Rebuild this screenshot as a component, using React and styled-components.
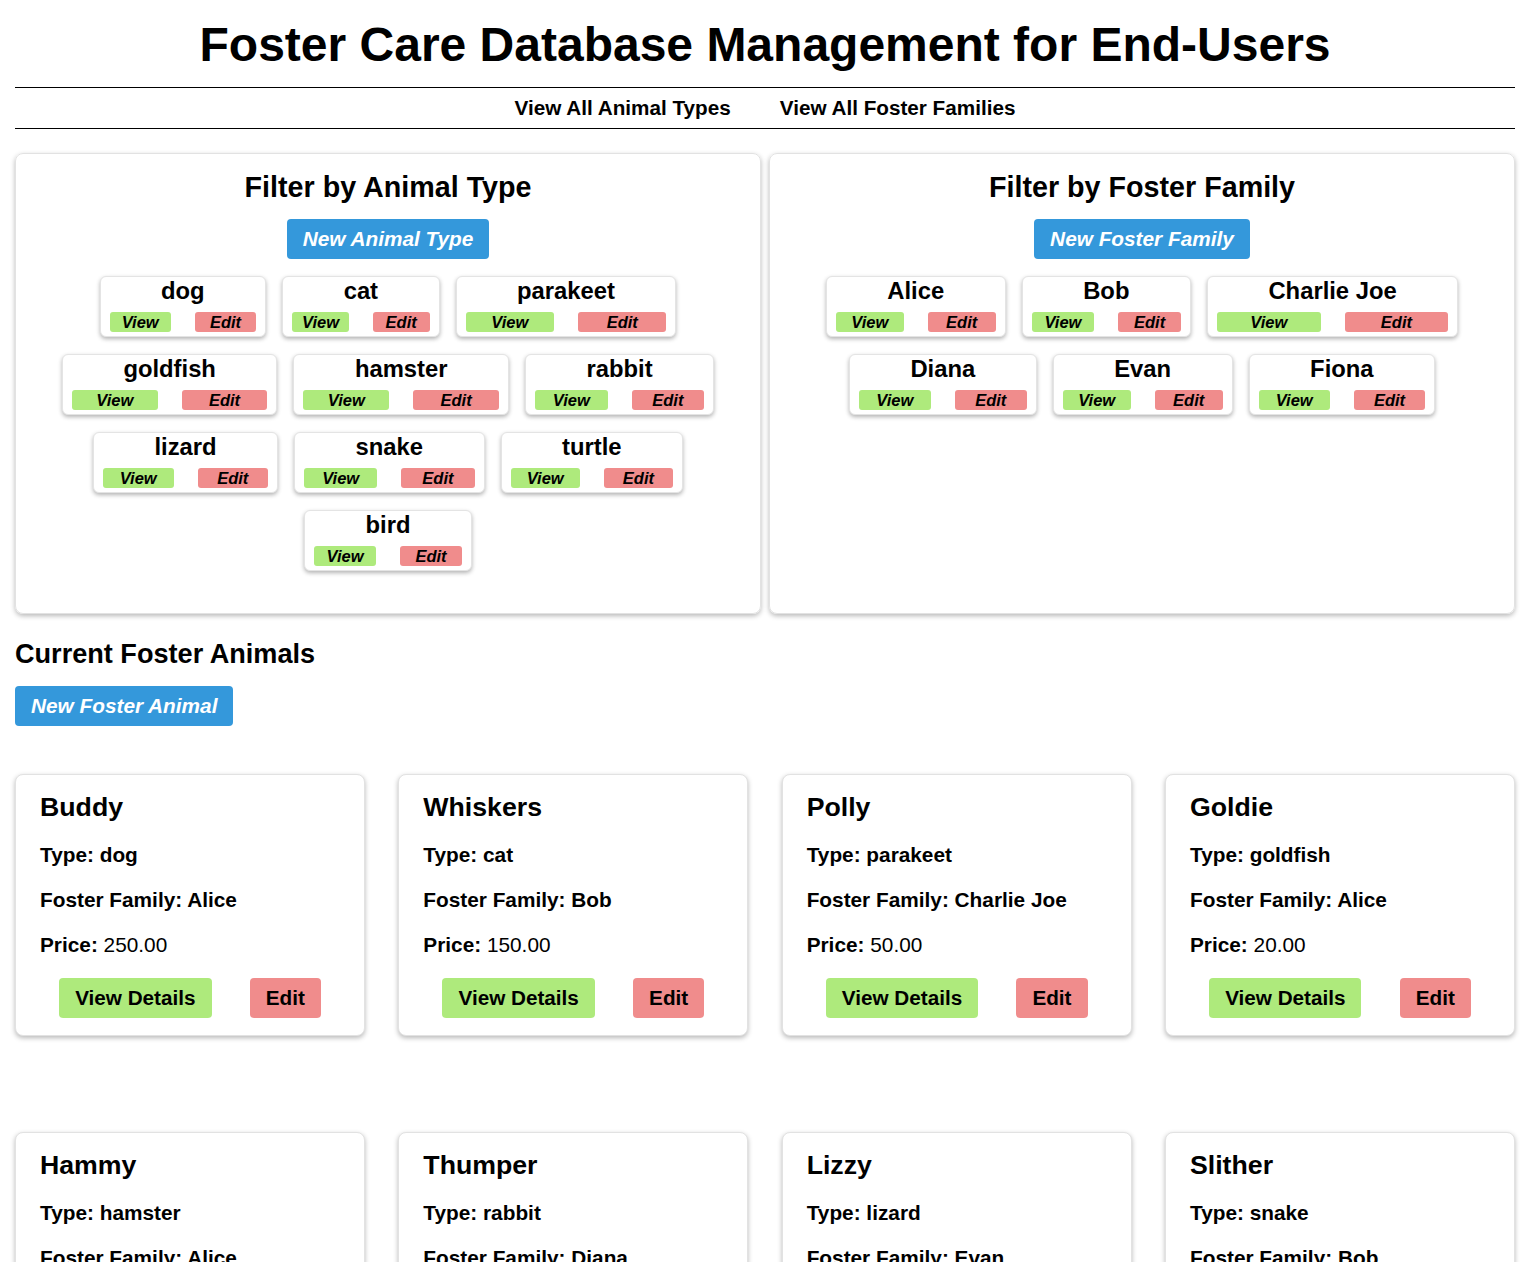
import React from "react";
import styled, { createGlobalStyle } from "styled-components";

const GlobalStyle = createGlobalStyle`
  html, body { margin: 0; padding: 0; background: #fff; }
  body {
    font-family: "Liberation Sans", Arial, Helvetica, sans-serif;
    color: #000;
  }
  * { box-sizing: border-box; }
`;

const Page = styled.div`
  padding: 0 15px 40px;
`;

const Title = styled.h1`
  margin: 17px 0 15px;
  font-size: 48px;
  line-height: 55px;
  font-weight: 700;
  text-align: center;
`;

const Nav = styled.nav`
  display: flex;
  justify-content: center;
  gap: 49px;
  border-top: 1px solid #000;
  border-bottom: 1px solid #000;
  padding: 8px 0;
`;

const NavLink = styled.a`
  font-size: 20.7px;
  line-height: 24px;
  font-weight: 700;
  color: #000;
  text-decoration: none;
  cursor: pointer;
`;

const FilterRow = styled.div`
  display: grid;
  grid-template-columns: 1fr 1fr;
  gap: 8px;
  margin-top: 24px;
`;

const Panel = styled.section`
  border: 1px solid #e2e2e2;
  border-radius: 8px;
  box-shadow: 0 2px 5px rgba(0, 0, 0, 0.28);
  padding: 17px 16px 42px;
  display: flex;
  flex-direction: column;
  align-items: center;
`;

const PanelTitle = styled.h2`
  margin: 0;
  font-size: 28.7px;
  line-height: 32px;
  font-weight: 700;
`;

const PrimaryButton = styled.button`
  height: 40px;
  padding: 0 16px;
  border: none;
  border-radius: 4px;
  background: #3498db;
  color: #fff;
  font-family: inherit;
  font-size: 20.8px;
  font-weight: 700;
  font-style: italic;
  cursor: pointer;
  margin-top: ${(p) => p.$top || 0}px;
`;

const TagList = styled.div`
  display: flex;
  flex-wrap: wrap;
  justify-content: center;
  gap: 17px 16px;
  margin-top: 17px;
`;

const TagCard = styled.div`
  display: flex;
  flex-direction: column;
  align-items: stretch;
  border: 1px solid #e4e4e4;
  border-radius: 6px;
  box-shadow: 0 2px 4px rgba(0, 0, 0, 0.3);
  padding: 0 9px 4px;
  background: #fff;
`;

const TagName = styled.div`
  font-size: 23.8px;
  line-height: 28px;
  font-weight: 700;
  text-align: center;
  padding: 0 51.5px;
  margin-bottom: 7px;
  white-space: nowrap;
`;

const TagButtons = styled.div`
  display: flex;
  gap: 24px;
`;

const SmallButton = styled.button`
  flex: 1 1 0;
  height: 20px;
  padding: 0;
  border: none;
  border-radius: 3px;
  background: ${(p) => (p.$variant === "edit" ? "#f08c8c" : "#aeea7c")};
  color: #000;
  font-family: inherit;
  font-size: 16.5px;
  line-height: 20px;
  font-weight: 700;
  font-style: italic;
  cursor: pointer;
`;

const SectionTitle = styled.h2`
  margin: 24px 0 0;
  font-size: 27.1px;
  line-height: 31px;
  font-weight: 700;
`;

const AnimalGrid = styled.div`
  display: flex;
  flex-wrap: wrap;
  justify-content: space-between;
`;

const AnimalCard = styled.article`
  width: 350px;
  margin: 48px 0;
  border: 1px solid #e2e2e2;
  border-radius: 8px;
  box-shadow: 0 2px 5px rgba(0, 0, 0, 0.28);
  padding: 15px 24px 17px;
  background: #fff;
`;

const AnimalName = styled.h3`
  margin: 0;
  font-size: 26.7px;
  line-height: 34px;
  font-weight: 700;
`;

const Info = styled.p`
  margin: ${(p) => (p.$first ? 19 : 21)}px 0 0;
  font-size: 20.8px;
  line-height: 24px;
  font-weight: ${(p) => (p.$plain ? 400 : 700)};
`;

const Strong = styled.strong`
  font-weight: 700;
`;

const CardActions = styled.div`
  display: flex;
  justify-content: space-around;
  margin-top: 21px;
`;

const ActionButton = styled.button`
  height: 40px;
  padding: 0 16px;
  border: none;
  border-radius: 4px;
  background: ${(p) => (p.$variant === "edit" ? "#f08c8c" : "#aeea7c")};
  color: #000;
  font-family: inherit;
  font-size: 20.7px;
  font-weight: 700;
  cursor: pointer;
`;

const animalTypes = [
  "dog",
  "cat",
  "parakeet",
  "goldfish",
  "hamster",
  "rabbit",
  "lizard",
  "snake",
  "turtle",
  "bird",
];

const families = ["Alice", "Bob", "Charlie Joe", "Diana", "Evan", "Fiona"];

const animals = [
  { name: "Buddy", type: "dog", family: "Alice", price: "250.00" },
  { name: "Whiskers", type: "cat", family: "Bob", price: "150.00" },
  { name: "Polly", type: "parakeet", family: "Charlie Joe", price: "50.00" },
  { name: "Goldie", type: "goldfish", family: "Alice", price: "20.00" },
  { name: "Hammy", type: "hamster", family: "Alice", price: "30.00" },
  { name: "Thumper", type: "rabbit", family: "Diana", price: "80.00" },
  { name: "Lizzy", type: "lizard", family: "Evan", price: "120.00" },
  { name: "Slither", type: "snake", family: "Bob", price: "200.00" },
];

function Tag({ label }) {
  return (
    <TagCard>
      <TagName>{label}</TagName>
      <TagButtons>
        <SmallButton>View</SmallButton>
        <SmallButton $variant="edit">Edit</SmallButton>
      </TagButtons>
    </TagCard>
  );
}

export default function App() {
  return (
    <>
      <GlobalStyle />
      <Page>
        <Title>Foster Care Database Management for End-Users</Title>
        <Nav>
          <NavLink>View All Animal Types</NavLink>
          <NavLink>View All Foster Families</NavLink>
        </Nav>

        <FilterRow>
          <Panel>
            <PanelTitle>Filter by Animal Type</PanelTitle>
            <PrimaryButton $top={16}>New Animal Type</PrimaryButton>
            <TagList>
              {animalTypes.map((t) => (
                <Tag key={t} label={t} />
              ))}
            </TagList>
          </Panel>
          <Panel>
            <PanelTitle>Filter by Foster Family</PanelTitle>
            <PrimaryButton $top={16}>New Foster Family</PrimaryButton>
            <TagList>
              {families.map((f) => (
                <Tag key={f} label={f} />
              ))}
            </TagList>
          </Panel>
        </FilterRow>

        <SectionTitle>Current Foster Animals</SectionTitle>
        <PrimaryButton $top={17}>New Foster Animal</PrimaryButton>

        <AnimalGrid>
          {animals.map((a) => (
            <AnimalCard key={a.name}>
              <AnimalName>{a.name}</AnimalName>
              <Info $first>Type: {a.type}</Info>
              <Info>Foster Family: {a.family}</Info>
              <Info $plain>
                <Strong>Price:</Strong> {a.price}
              </Info>
              <CardActions>
                <ActionButton>View Details</ActionButton>
                <ActionButton $variant="edit">Edit</ActionButton>
              </CardActions>
            </AnimalCard>
          ))}
        </AnimalGrid>
      </Page>
    </>
  );
}
